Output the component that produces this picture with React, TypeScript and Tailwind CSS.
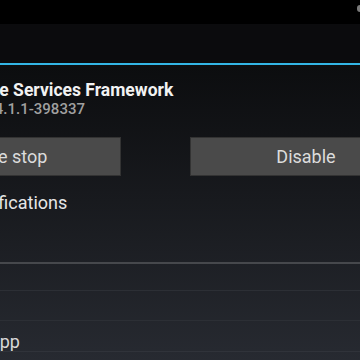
export default function App() {
  return (
    <div
      className="w-[360px] h-[360px] overflow-hidden flex flex-col bg-black"
      style={{ fontFamily: "Roboto, 'Noto Sans', sans-serif" }}
    >
      <div className="h-[24px] shrink-0 bg-black flex justify-end items-start pt-[5px]">
        <div className="w-[3px] h-[7px] bg-[#7a7a7a] rounded-l-full" />
      </div>
      <div className="h-[39px] shrink-0 bg-[#0b0b0d]" />
      <div className="h-[2px] shrink-0 bg-[#33b5e5]" />
      <div className="flex-1 flex flex-col bg-gradient-to-b from-[#0c0d0f] to-[#272a31] overflow-hidden">
        <div className="mt-[15px] ml-[-47px] h-[20px] leading-[20px] text-[17.5px] font-bold text-[#f2f2f2] whitespace-nowrap">
          Google Services Framework
        </div>
        <div className="mt-[1px] ml-[-58px] h-[16px] leading-[16px] text-[15px] font-medium text-[#a0a0a0] whitespace-nowrap">
          version 4.1.1-398337
        </div>
        <div className="mt-[20px] ml-[-111px] flex gap-[69px] shrink-0">
          <div className="w-[232px] h-[39px] shrink-0 bg-[#4a4a4a] border border-[#333333] flex items-center justify-center text-[18px] text-[#dcdcdc]">
            Force stop
          </div>
          <div className="w-[232px] h-[39px] shrink-0 bg-[#4a4a4a] border border-[#333333] flex items-center justify-center text-[18px] text-[#dcdcdc]">
            Disable
          </div>
        </div>
        <div className="mt-[15px] ml-[-81px] h-[24px] leading-[24px] text-[18px] text-[#e6e6e6] whitespace-nowrap">
          Show notifications
        </div>
        <div className="mt-[47px] h-[2px] shrink-0 bg-[#46484c]" />
        <div className="h-[26px] shrink-0" />
        <div className="h-[1px] shrink-0 bg-[#2c2f35]" />
        <div className="h-[29px] shrink-0" />
        <div className="h-[1px] shrink-0 bg-[#2c2f35]" />
        <div className="h-[30px] shrink-0 pt-[12px]">
          <div className="ml-[-12px] h-[18px] leading-[18px] text-[18px] text-[#d8d8d8] whitespace-nowrap">
            App
          </div>
        </div>
        <div className="h-[1px] shrink-0 bg-[#30333a]" />
      </div>
    </div>
  );
}
